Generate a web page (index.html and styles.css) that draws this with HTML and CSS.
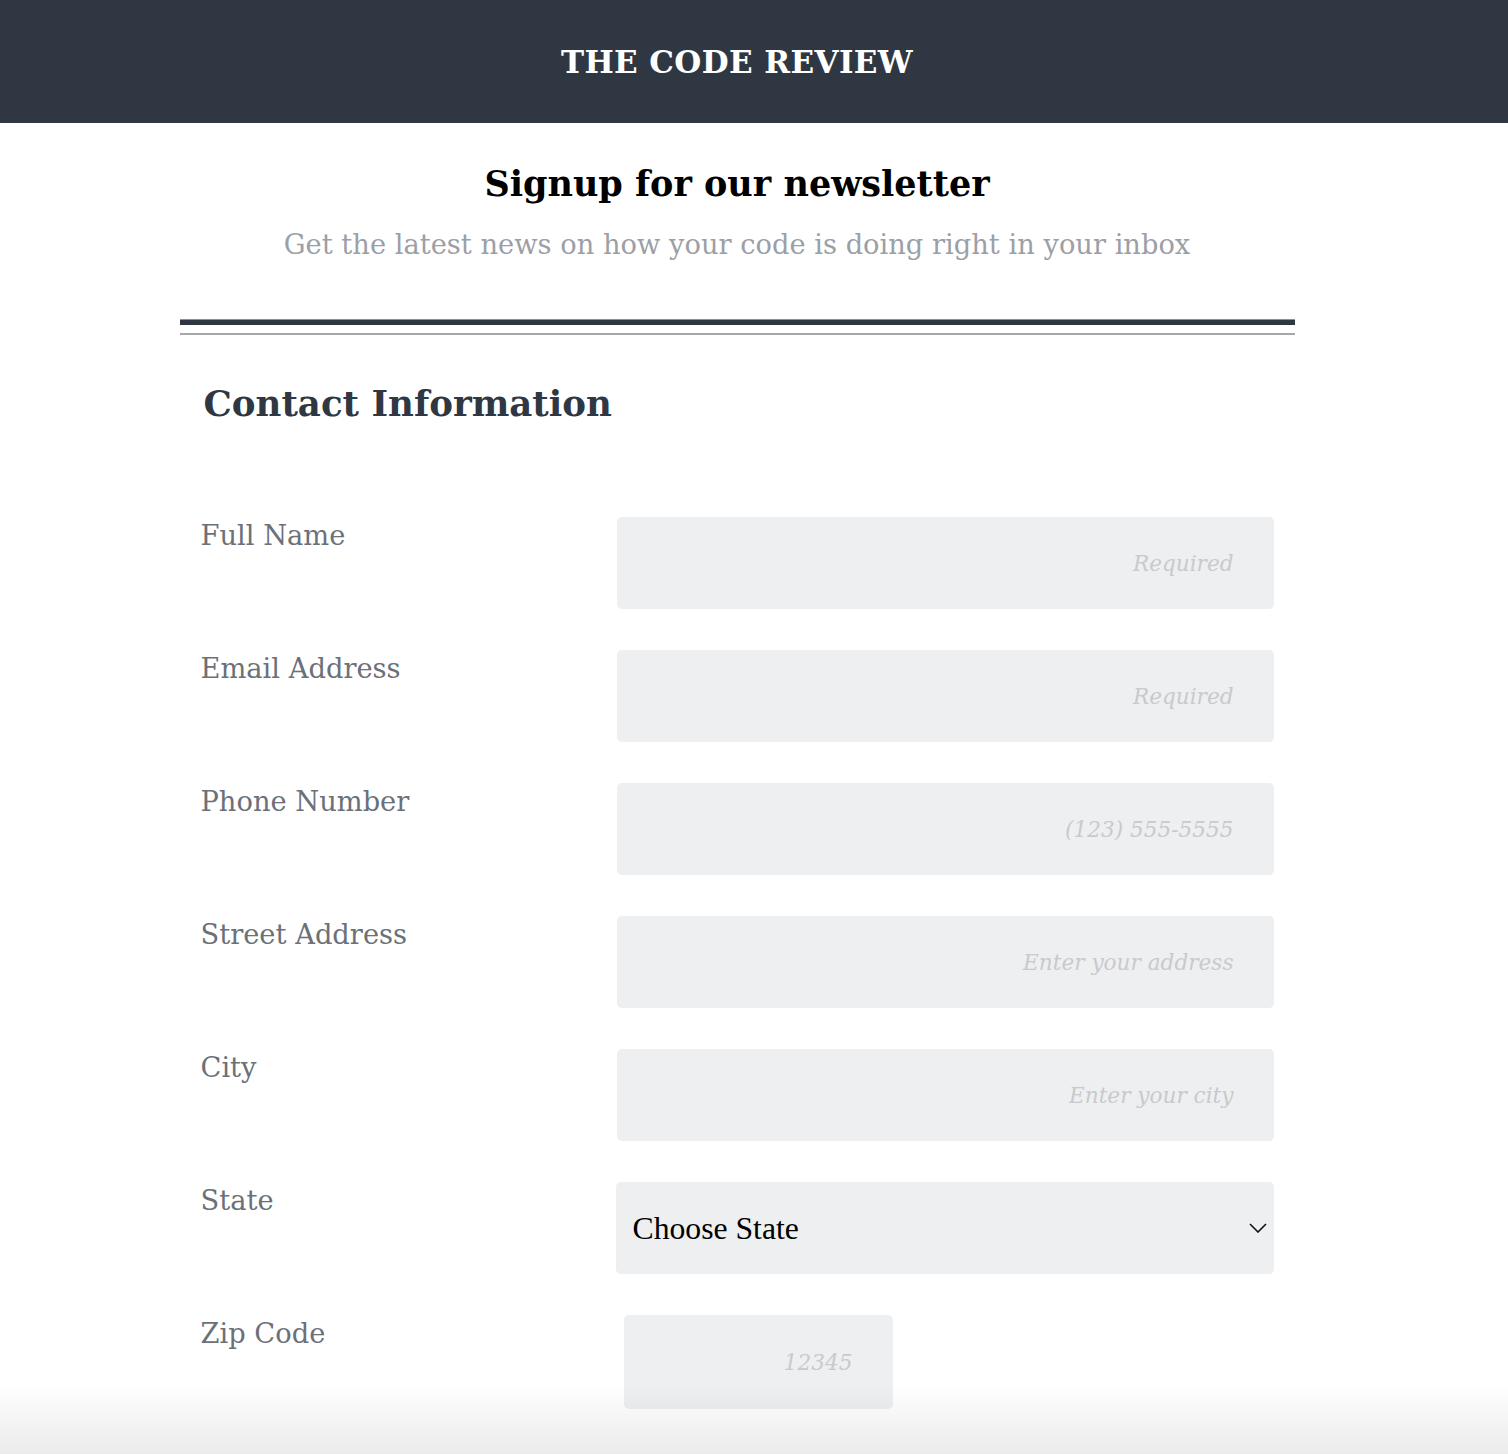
FILE: index.html
```html
<!DOCTYPE html>
<html lang="en">
<head>
<meta charset="utf-8">
<title>The Code Review</title>
<link rel="stylesheet" href="styles.css">
</head>
<body>
<header class="site-header">
  <h1 class="brand">THE CODE REVIEW</h1>
</header>
<main class="page">
  <section class="intro">
    <h2 class="intro-title">Signup for our newsletter</h2>
    <p class="intro-sub">Get the latest news on how your code is doing right in your inbox</p>
  </section>
  <div class="rule"><div class="rule-dark"></div><div class="rule-light"></div></div>
  <form class="form">
    <h3 class="section-title">Contact Information</h3>
    <div class="rows">
      <label class="label" for="name">Full Name</label>
      <input class="field" id="name" type="text" placeholder="Required">
      <label class="label" for="email">Email Address</label>
      <input class="field" id="email" type="email" placeholder="Required">
      <label class="label" for="phone">Phone Number</label>
      <input class="field" id="phone" type="tel" placeholder="(123) 555-5555">
      <label class="label" for="street">Street Address</label>
      <input class="field" id="street" type="text" placeholder="Enter your address">
      <label class="label" for="city">City</label>
      <input class="field" id="city" type="text" placeholder="Enter your city">
      <label class="label" for="state">State</label>
      <div class="select-wrap">
        <select class="select" id="state"><option>Choose State</option></select>
        <svg class="chevron" width="18" height="10" viewBox="0 0 18 10"><path d="M1 1l8 8 8-8" fill="none" stroke="#111" stroke-width="1.6"/></svg>
      </div>
      <label class="label" for="zip">Zip Code</label>
      <div class="zip-cell"><input class="field zip" id="zip" type="text" placeholder="12345"></div>
    </div>
  </form>
</main>
<div class="bottom-fade"></div>
</body>
</html>
```

FILE: styles.css
```css
* { box-sizing: border-box; }
html, body { margin: 0; padding: 0; background: #fff; }
body { font-family: "DejaVu Serif", "Liberation Serif", serif; color: #2f3842; }

.site-header {
  background: #2f3842;
  height: 123px;
  display: flex;
  align-items: center;
  justify-content: center;
  padding-right: 34px;
}
.brand {
  margin: 0;
  color: #fff;
  font-size: 31px;
  font-weight: bold;
  letter-spacing: 0.4px;
}

.page {
  width: 1474px;
  display: flex;
  flex-direction: column;
  align-items: center;
}
.intro { text-align: center; padding-top: 40px; }
.intro-title {
  margin: 0;
  color: #000;
  font-size: 35px;
  font-weight: bold;
}
.intro-sub {
  margin: 25px 0 0;
  color: #9c9fa5;
  font-size: 27.3px;
}

.rule {
  width: 1115px;
  margin-top: 59px;
}
.rule-dark {
  height: 6px;
  border-top: 1px solid #8d8f92;
  background: #2f3842;
}
.rule-light {
  height: 2px;
  margin-top: 8px;
  background: #a6a7a9;
}

.form { width: 1115px; }
.section-title {
  margin: 48px 0 0 24px;
  font-size: 35.6px;
  font-weight: bold;
  color: #2f3842;
}
.rows {
  display: grid;
  grid-template-columns: 416px 657px;
  column-gap: 0;
  row-gap: 41px;
  margin: 93px 0 0 21px;
}
.label {
  font-size: 27.3px;
  color: #6b7079;
  padding-top: 1px;
  line-height: 36px;
}
.field {
  width: 100%;
  height: 92px;
  border: none;
  border-radius: 5px;
  background: #eeeff1;
  padding: 0 40px 0 20px;
  text-align: right;
  font-family: inherit;
  font-size: 21.6px;
  outline: none;
}
.field::placeholder {
  color: #c8cacd;
  font-style: italic;
}
.select-wrap { position: relative; margin-left: -1px; }
.select {
  -webkit-appearance: none;
  appearance: none;
  width: 658px;
  height: 92px;
  border: none;
  border-radius: 5px;
  background: #eeeff1;
  padding: 0 17px;
  font-family: "Liberation Serif", serif;
  font-size: 31.7px;
  color: #000;
}
.chevron {
  position: absolute;
  right: 7px;
  top: 41px;
  pointer-events: none;
}
.zip-cell { padding-left: 7px; }
.zip.field { width: 269px; height: 94px; }

.bottom-fade {
  position: fixed;
  left: 0;
  right: 0;
  bottom: 0;
  height: 70px;
  background: linear-gradient(rgba(0,0,0,0), rgba(0,0,0,0.08));
  pointer-events: none;
}
```
